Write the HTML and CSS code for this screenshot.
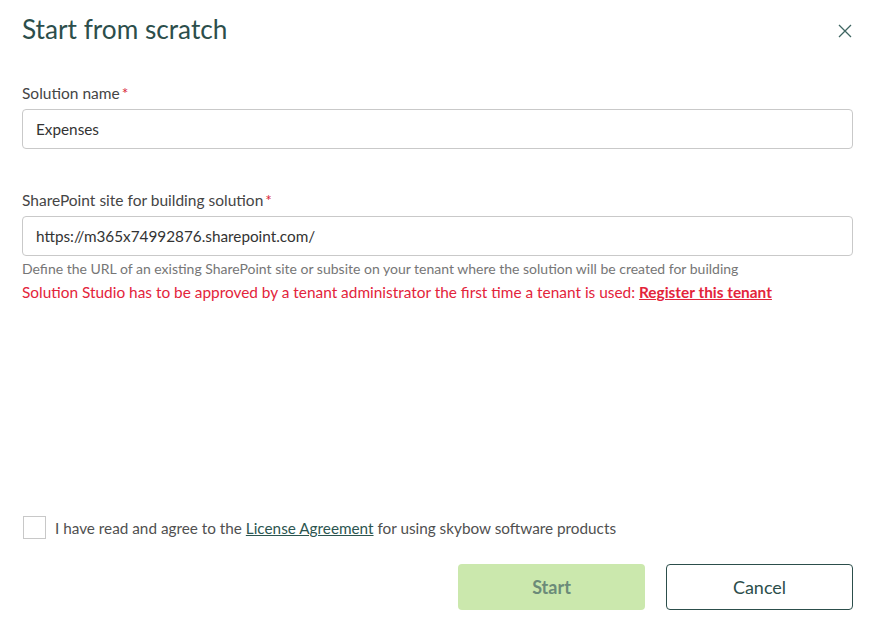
FILE: index.html
```html
<!DOCTYPE html>
<html lang="en">
<head>
<meta charset="utf-8">
<title>Start from scratch</title>
<link rel="stylesheet" href="styles.css">
</head>
<body>
<div class="dialog">
  <div class="header">
    <h1 class="title">Start from scratch</h1>
    <button class="close" aria-label="Close">
      <svg width="14" height="14" viewBox="0 0 14 14"><path d="M1 1 L13 13 M13 1 L1 13" stroke="#3f6562" stroke-width="1.3" fill="none"/></svg>
    </button>
  </div>

  <div class="field first">
    <label class="label">Solution name<span class="req">*</span></label>
    <div class="input">Expenses</div>
  </div>

  <div class="field second">
    <label class="label">SharePoint site for building solution<span class="req">*</span></label>
    <div class="input">https://m365x74992876.sharepoint.com/</div>
    <div class="help">Define the URL of an existing SharePoint site or subsite on your tenant where the solution will be created for building</div>
    <div class="error">Solution Studio has to be approved by a tenant administrator the first time a tenant is used: <a class="err-link" href="#">Register this tenant</a></div>
  </div>

  <div class="spacer"></div>

  <div class="agree">
    <span class="checkbox"></span>
    <span class="agree-text">I have read and agree to the <a class="lic" href="#">License Agreement</a> for using skybow software products</span>
  </div>

  <div class="actions">
    <button class="btn primary">Start</button>
    <button class="btn secondary">Cancel</button>
  </div>
</div>
</body>
</html>
```

FILE: styles.css
```css
* { box-sizing: border-box; }
html, body { margin: 0; padding: 0; background: #fff; }
body { font-family: Lato, "Open Sans", sans-serif; color: #444; }

.dialog {
  height: 631px;
  display: flex;
  flex-direction: column;
  padding: 14px 22px 21px 22px;
}

.header {
  display: flex;
  justify-content: space-between;
  align-items: flex-start;
}
.title {
  margin: 0;
  font-size: 26.2px;
  font-weight: 400;
  line-height: 1.2;
  color: #2c4e4b;
}
.close {
  border: 0;
  background: none;
  padding: 0;
  margin: 10px 1px 0 0;
  width: 14px;
  height: 14px;
  cursor: pointer;
  display: block;
}
.close svg { display: block; }

.field.first { margin-top: 38px; }
.field.second { margin-top: 41px; }

.label {
  display: block;
  font-size: 15.5px;
  line-height: 1.2;
  color: #454545;
  padding-top: 1px;
  margin-bottom: 6px;
}
.req { color: #d9283a; margin-left: 2px; }

.input {
  height: 40px;
  border: 1px solid #c9c9c9;
  border-radius: 4px;
  padding: 0 13px;
  display: flex;
  align-items: center;
  font-size: 15.3px;
  color: #333;
}

.help {
  font-size: 14px;
  color: #767676;
  margin-top: 5px;
  line-height: 1.2;
}
.error {
  font-size: 15.4px;
  color: #e3243b;
  margin-top: 6px;
  line-height: 1.2;
}
.err-link {
  color: #e3243b;
  font-weight: 700;
  text-decoration: underline;
}

.spacer { flex: 1; }

.agree {
  display: flex;
  align-items: center;
  gap: 9px;
  padding-left: 1px;
}
.checkbox {
  width: 23px;
  height: 23px;
  border: 1px solid #c8c8c8;
  display: block;
  flex: none;
}
.agree-text {
  font-size: 15.3px;
  color: #505050;
}
.lic { color: #2c5550; text-decoration: underline; }

.actions {
  display: flex;
  justify-content: flex-end;
  gap: 21px;
  margin-top: 25px;
}
.btn {
  width: 187px;
  height: 46px;
  border-radius: 4px;
  font-family: Lato, "Open Sans", sans-serif;
  font-size: 18px;
  cursor: pointer;
}
.btn.primary {
  background: #cbe8ad;
  border: 0;
  color: #6b8b79;
  font-weight: 700;
}
.btn.secondary {
  background: #fff;
  border: 1px solid #2c4e4b;
  color: #2c4e4b;
  font-weight: 400;
}
```
